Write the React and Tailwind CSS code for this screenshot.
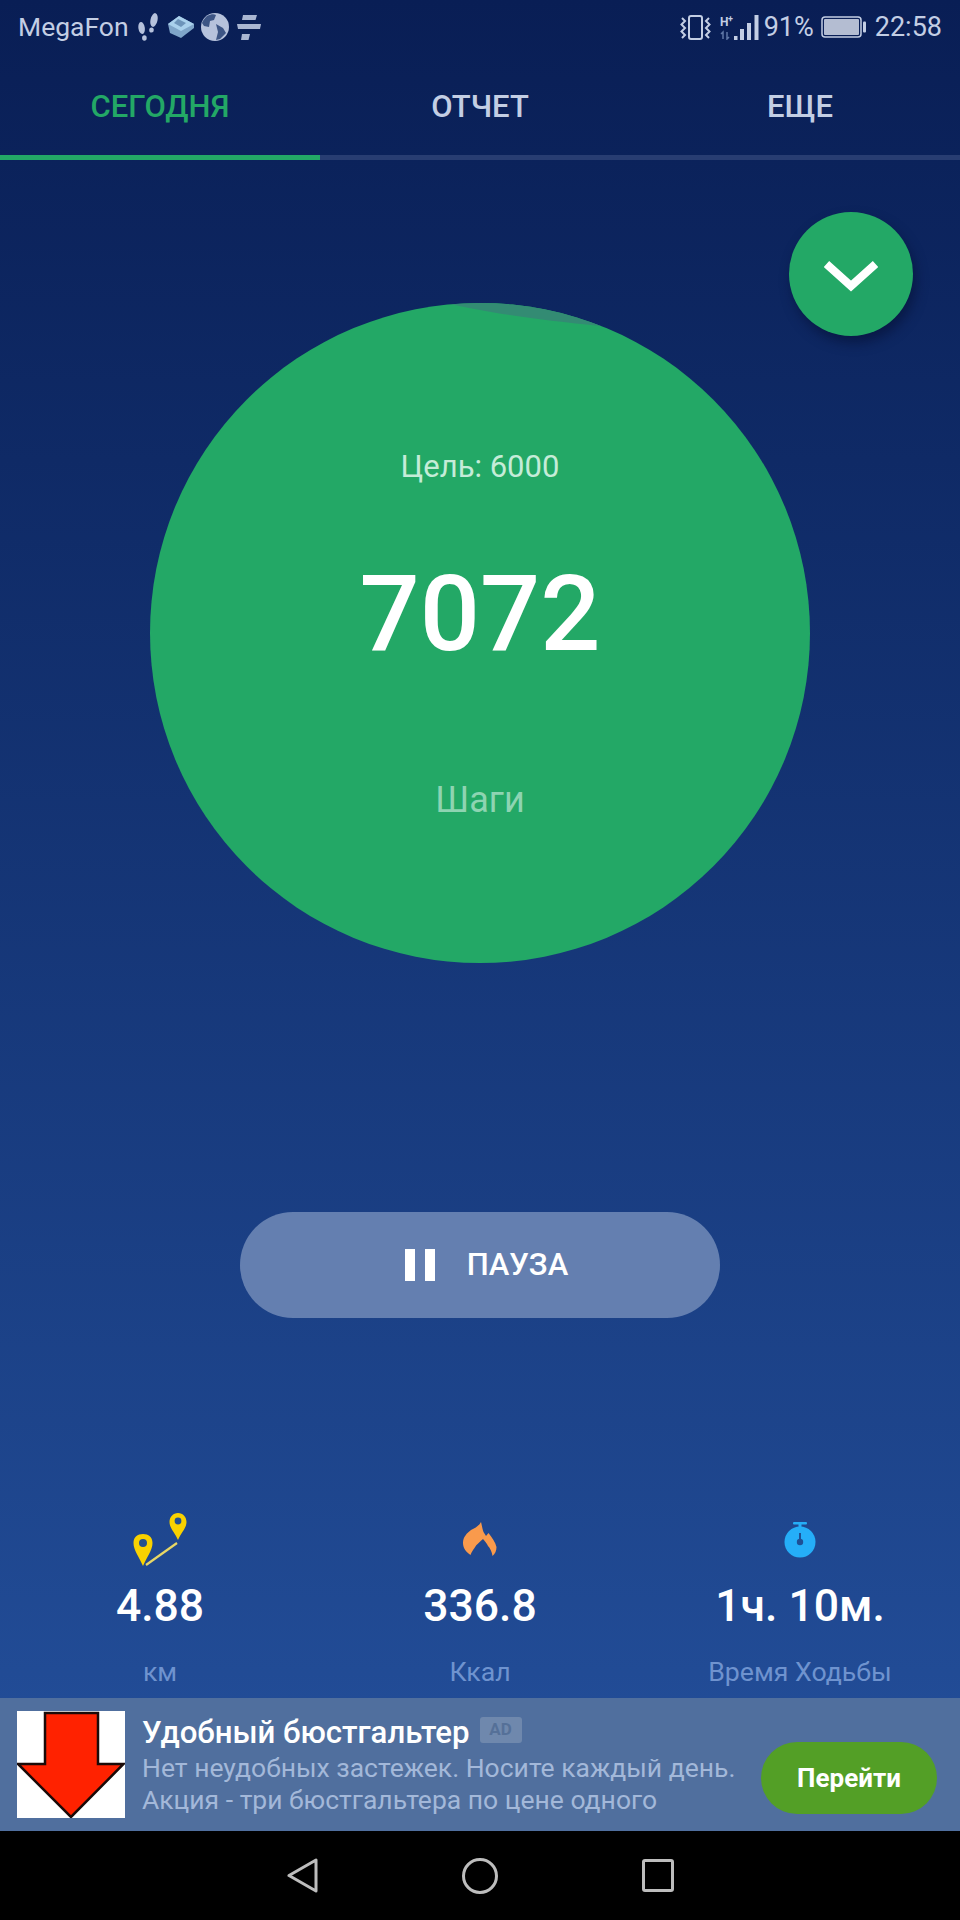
const font = { fontFamily: "Roboto, sans-serif" };

const Footsteps = () => (
  <svg width="21" height="28" viewBox="0 0 21 28" fill="#b6c2dc">
    <ellipse cx="16" cy="7" rx="3.5" ry="7" transform="rotate(12 16 7)" />
    <ellipse cx="13.5" cy="17" rx="2.3" ry="2.6" />
    <ellipse cx="3.6" cy="15" rx="3.2" ry="6" transform="rotate(-8 3.6 15)" />
    <ellipse cx="6.4" cy="25" rx="2.3" ry="2.8" />
  </svg>
);

const Pedometer = () => (
  <svg width="26" height="22" viewBox="0 0 26 22">
    <path d="M11 0 L0 8 L2 17 L13 22 L26 12 L26 8 Z" fill="#7fa5c9" />
    <path d="M11 0 L0 8 L13 15 L26 8 Z" fill="#a9d0ec" />
    <path d="M10 3 L6 7 L13 11 L18 7 Z" fill="#6d94ba" />
  </svg>
);

const Globe = () => (
  <svg width="28" height="28" viewBox="0 0 28 28">
    <circle cx="14" cy="14" r="14" fill="#b6c2dc" />
    <path d="M6 3 C10 1 13 1 15 2 L13 7 L9 8 L8 14 L3 13 L1 10 C2 7 4 5 6 3 Z" fill="#3d5585" />
    <path d="M15 11 L22 15 L25 20 L19 26 L15 27 L17 19 Z" fill="#3d5585" />
  </svg>
);

const Stripes = () => (
  <svg width="24" height="25" viewBox="0 0 24 25" fill="#a9b6d2">
    <path d="M6 0 H20 L18.5 5 H5 Z" />
    <path d="M0 9 H24 L23 14 H1 Z" />
    <path d="M5 19 H13 L11.5 25 H4 Z" />
  </svg>
);

const Vibrate = () => (
  <svg width="31" height="25" viewBox="0 0 31 25" fill="none" stroke="#c3cee4" strokeWidth="2">
    <rect x="9" y="1" width="13" height="23" rx="2" />
    <path d="M2 3 L5 6 L1.5 9.5 L5 13 L1.5 16.5 L5 20 L2 23" />
    <path d="M29 3 L26 6 L29.5 9.5 L26 13 L29.5 16.5 L26 20 L29 23" />
  </svg>
);

const Signal = () => (
  <svg width="39" height="25" viewBox="0 0 39 25">
    <text x="0" y="11" fontSize="12" fontWeight="700" fill="#c3cee4" fontFamily="Roboto, sans-serif">H</text>
    <text x="8" y="7" fontSize="9" fontWeight="700" fill="#c3cee4" fontFamily="Roboto, sans-serif">+</text>
    <path d="M3 24 V17 L1 19 M7 17 V24 L9 22" stroke="#5f77a6" strokeWidth="1.5" fill="none" />
    <g fill="#c3cee4">
      <rect x="14" y="21" width="3.5" height="4" />
      <rect x="20" y="14" width="4" height="11" />
      <rect x="27" y="8" width="4" height="17" />
      <rect x="34.5" y="0" width="4" height="25" />
    </g>
  </svg>
);

const Battery = () => (
  <svg width="45" height="22" viewBox="0 0 45 22">
    <rect x="1" y="1" width="39" height="20" rx="3" fill="none" stroke="#c3cee4" strokeWidth="1.5" />
    <rect x="3" y="3" width="35" height="16" rx="1" fill="#b4bdd2" />
    <rect x="42" y="5.5" width="3" height="11" rx="1" fill="#c3cee4" />
  </svg>
);

const Tab = ({ label, active }) => (
  <div className="flex-1 flex flex-col">
    <div className={`h-[101px] flex items-end justify-center pb-[28px] text-[31px] leading-[40px] font-medium ${active ? "text-[#23a866]" : "text-[#c3cee4]"}`}>
      {label}
    </div>
    <div className={`h-[5px] ${active ? "bg-[#23a866]" : "bg-[#283d72]"}`} />
  </div>
);

const PinsIcon = () => (
  <svg width="54" height="53" viewBox="0 0 54 53">
    <path d="M10 53 C6 44 0.5 37 0.5 30 C0.5 24 4.5 21 10 21 C15.5 21 19.5 24 19.5 30 C19.5 37 14 44 10 53 Z" fill="#f9d200" />
    <circle cx="10" cy="30" r="4" fill="#24508f" />
    <path d="M45 27 C42 20 36.5 15 36.5 9 C36.5 4 40 0 45 0 C50 0 53.5 4 53.5 9 C53.5 15 48 20 45 27 Z" fill="#f9d200" />
    <circle cx="45" cy="8" r="3.4" fill="#24508f" />
    <path d="M13 52 L44 30" stroke="#e8d765" strokeWidth="2.2" />
  </svg>
);

const FlameIcon = () => (
  <svg width="34" height="36" viewBox="0 0 34 36">
    <path
      d="M7.5 34 C3 31 0 27 0 22 C0 16 4 12 8 9 C12 7 16 5 18 1 C19 5 19.5 8 20.5 11 L23 15 L25.5 12 C29 17 32.5 21 33.5 26 C33.5 30 32 33 29.5 35 C29 31 27 27 25 25 C24 23 22 20 20 18 C17 21 13.5 23 11.5 27 C10 29 8.5 31 7.5 34 Z"
      fill="#f99a4c"
    />
  </svg>
);

const StopwatchIcon = () => (
  <svg width="32" height="36" viewBox="0 0 32 36">
    <rect x="9" y="0" width="14" height="2.5" rx="1" fill="#25aef8" />
    <rect x="14.5" y="2" width="3" height="5" fill="#25aef8" />
    <circle cx="16" cy="20" r="15.5" fill="#25aef8" />
    <circle cx="16" cy="20" r="3.2" fill="#1f4f94" />
    <rect x="15" y="11" width="2" height="9" fill="#1f4f94" />
  </svg>
);

const Stat = ({ icon, value, label, iconPad }) => (
  <div className="flex flex-col items-center w-[320px]">
    <div className={`flex items-end justify-center h-[68px] ${iconPad}`}>{icon}</div>
    <div className="mt-[14px] text-[44.5px] leading-[48px] font-medium text-white">{value}</div>
    <div className="mt-[26px] text-[26.7px] leading-[32px] text-[#6f93cf]">{label}</div>
  </div>
);

const ArrowImage = () => (
  <svg width="108" height="107" viewBox="0 0 108 107" className="shrink-0">
    <rect width="108" height="107" fill="#ffffff" />
    <path d="M28 2 H81 V53 H106.5 L54 106 L1 53 H28 Z" fill="#ff2200" stroke="#1a0a08" strokeWidth="2.5" />
  </svg>
);

export default function App() {
  return (
    <div
      className="w-[960px] h-[1920px] flex flex-col overflow-hidden bg-gradient-to-b from-[#091e55] to-[#25529f]"
      style={font}
    >
      <div className="flex-1 flex flex-col min-h-0">
        {/* status bar */}
        <div className="h-[54px] shrink-0 px-[18px] flex items-center justify-between text-[#c3cee4] leading-[30px]">
          <div className="flex items-center">
            <span className="text-[26.5px]">MegaFon</span>
            <span className="ml-[9px] flex"><Footsteps /></span>
            <span className="ml-[9px] flex"><Pedometer /></span>
            <span className="ml-[7px] flex"><Globe /></span>
            <span className="ml-[8px] flex"><Stripes /></span>
          </div>
          <div className="flex items-center text-[27px]">
            <Vibrate />
            <span className="ml-[9px] flex"><Signal /></span>
            <span className="ml-[5px]">91%</span>
            <span className="ml-[7px] flex"><Battery /></span>
            <span className="ml-[9px]">22:58</span>
          </div>
        </div>

        {/* tabs */}
        <div className="flex shrink-0">
          <Tab label="СЕГОДНЯ" active />
          <Tab label="ОТЧЕТ" />
          <Tab label="ЕЩЕ" />
        </div>

        {/* goal circle */}
        <div className="relative h-[1158px] shrink-0 flex flex-col items-center">
          <button className="absolute left-[789px] top-[52px] w-[124px] h-[124px] rounded-full bg-[#23a866] flex items-center justify-center shadow-[3px_7px_12px_rgba(5,15,50,0.55)]">
            <svg className="mt-[6px]" width="54" height="32" viewBox="0 0 54 32" fill="none">
              <path d="M2.5 3 L27 25 L51.5 3" stroke="#ffffff" strokeWidth="8" />
            </svg>
          </button>

          <div className="relative mt-[143px] w-[660px] h-[660px] shrink-0 rounded-full overflow-hidden bg-[#23a866] flex flex-col items-center text-center">
            <svg className="absolute left-0 top-0" width="660" height="30" viewBox="0 0 660 30">
              <path d="M296 0 C335 9 385 17 452 23 L452 0 Z" fill="#338b73" />
            </svg>
            <div className="relative mt-[146px] text-[31px] leading-[36px] text-[#c5ecd8]">Цель: 6000</div>
            <div className="relative mt-[67px] text-[106px] leading-[124px] font-medium text-white">7072</div>
            <div className="relative mt-[104px] text-[36px] leading-[40px] text-[#8ed4b2]">Шаги</div>
          </div>

          <button className="mt-[249px] w-[480px] h-[106px] shrink-0 rounded-full bg-[#647fb0] flex items-center justify-center text-white">
            <span className="flex items-center ml-[13px]">
              <span className="flex gap-[10px] mr-[32px]">
                <span className="w-[10px] h-[32px] bg-white" />
                <span className="w-[10px] h-[32px] bg-white" />
              </span>
              <span className="text-[31px] leading-[36px] font-medium">ПАУЗА</span>
            </span>
          </button>
        </div>

        {/* stats */}
        <div className="flex shrink-0 mt-[182px]">
          <Stat icon={<PinsIcon />} value="4.88" label="км" iconPad="pb-[2px]" />
          <Stat icon={<FlameIcon />} value="336.8" label="Ккал" iconPad="pb-[11px]" />
          <Stat icon={<StopwatchIcon />} value="1ч. 10м." label="Время Ходьбы" iconPad="pb-[10px]" />
        </div>
      </div>

      {/* ad */}
      <div className="h-[133px] shrink-0 bg-[#506f9e] flex items-center pl-[17px] pr-[23px]">
        <ArrowImage />
        <div className="ml-[17px] flex-1 min-w-0">
          <div className="flex items-center">
            <span className="text-[31.2px] leading-[36px] font-medium text-white">Удобный бюстгальтер</span>
            <span className="ml-[10px] mb-[6px] w-[42px] h-[26px] rounded-[3px] bg-[#6f88ad] flex items-center justify-center text-[17px] font-bold text-[#557098]">AD</span>
          </div>
          <div className="mt-[1px] text-[26.5px] leading-[32px] text-[#a3b8d9] whitespace-nowrap">Нет неудобных застежек. Носите каждый день.</div>
          <div className="text-[26.5px] leading-[31px] text-[#a3b8d9] whitespace-nowrap">Акция - три бюстгальтера по цене одного</div>
        </div>
        <button className="mt-[27px] w-[176px] h-[72px] rounded-full bg-[#539f26] text-white text-[26px] font-bold shrink-0">Перейти</button>
      </div>

      {/* nav bar */}
      <div className="h-[89px] shrink-0 bg-black flex items-center justify-center gap-[144px]">
        <svg width="31" height="35" viewBox="0 0 31 35" fill="none" stroke="#bdbdbd" strokeWidth="3" strokeLinejoin="round">
          <path d="M2 17.5 L29 2 V33 Z" />
        </svg>
        <span className="w-[36px] h-[36px] rounded-full border-[3px] border-[#bdbdbd]" />
        <span className="w-[32px] h-[33px] rounded-[3px] border-[3px] border-[#bdbdbd]" />
      </div>
    </div>
  );
}
